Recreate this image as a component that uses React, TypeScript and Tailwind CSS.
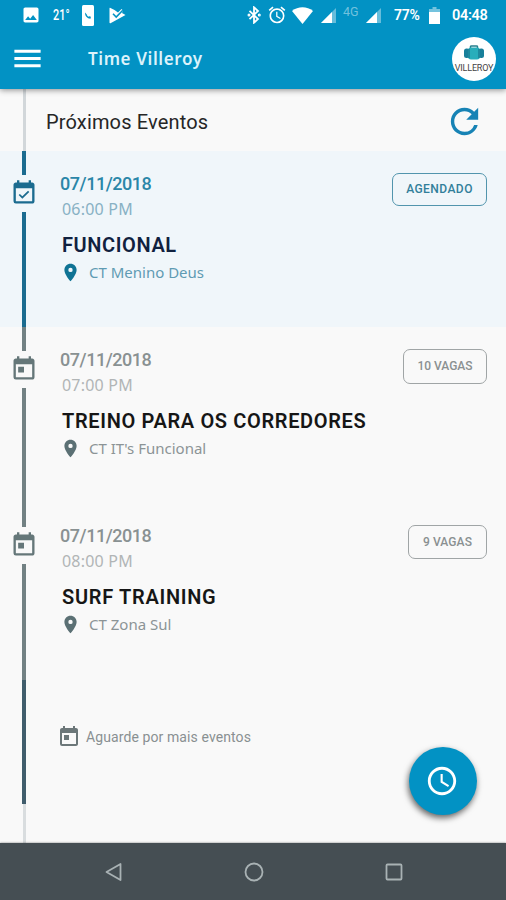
import type { ReactNode } from "react";
import clsx from "clsx";
import {
  MdAccessTime,
  MdAlarm,
  MdEventAvailable,
  MdImage,
  MdMenu,
  MdPlace,
  MdRefresh,
  MdToday,
} from "react-icons/md";

interface EventItem {
  date: string;
  time: string;
  title: string;
  titleSpacing: string;
  place: string;
  badge: string;
  badgeSize: string;
  booked?: boolean;
}

const events: EventItem[] = [
  {
    date: "07/11/2018",
    time: "06:00 PM",
    title: "FUNCIONAL",
    titleSpacing: "tracking-[0.6px]",
    place: "CT Menino Deus",
    badge: "AGENDADO",
    badgeSize: "w-[95px] mt-px h-[33px] tracking-[0.45px]",
    booked: true,
  },
  {
    date: "07/11/2018",
    time: "07:00 PM",
    title: "TREINO PARA OS CORREDORES",
    titleSpacing: "tracking-[0.65px]",
    place: "CT IT's Funcional",
    badge: "10 VAGAS",
    badgeSize: "w-[84px] mt-px h-[35px] tracking-[0px]",
  },
  {
    date: "07/11/2018",
    time: "08:00 PM",
    title: "SURF TRAINING",
    titleSpacing: "tracking-[0.7px]",
    place: "CT Zona Sul",
    badge: "9 VAGAS",
    badgeSize: "w-[79px] mt-px h-[34px] tracking-[0.1px]",
  },
];

function SignalIcon() {
  return (
    <svg className="h-[15px] w-[15px]" viewBox="0 0 15 15">
      <path d="M15 0V15H0Z" fill="#fff" fillOpacity=".4" />
      <path d="M11 4V15H0Z" fill="#fff" />
    </svg>
  );
}

function StatusBar() {
  return (
    <div className="flex h-[30px] items-center pl-[21px] pr-[18px] text-white">
      <MdImage className="mr-[12px] size-[20px]" />
      <span className="mr-[12px] w-[17px] origin-left scale-x-[.78] whitespace-nowrap text-[14px] font-medium">
        21°
      </span>
      {/* chamada */}
      <svg className="mr-[15px] h-[21px] w-[12px]" viewBox="0 0 12 21">
        <rect width="12" height="21" rx="1.500" fill="#fff" />
        <path
          d="M3 7.500c0 3.500 2 6 5.500 6.300l.4-2-1.600-.6-.8.600c-1-.6-1.500-1.300-1.700-2.300z"
          fill="#0292c4"
        />
      </svg>
      <svg className="h-[17px] w-[17px]" viewBox="0 0 17 17">
        <path
          d="M1 .8 5.500 3 9 5.400 12.500 2 14 3.500 13 6l3.500 2L1.500 16.200Q.5 16.500.5 15.500V1.200Q.5.600 1 .8Z"
          fill="#fff"
        />
        <path d="M4 6.800 7.200 10 13.800 3.300" fill="none" stroke="#0292c4" strokeWidth="1.600" />
      </svg>
      <div className="ml-auto flex items-center">
        <svg className="mr-[6px] h-[18px] w-[14px]" viewBox="0 0 14 18" fill="none" stroke="#fff" strokeWidth="1.800">
          <path d="M2.500 4.800 11 13l-4 3.700V1.300L11 5l-8.500 8.200" />
          <circle cx="2" cy="9" r=".6" />
          <circle cx="12.300" cy="9" r=".6" />
        </svg>
        <MdAlarm className="mr-[5px] size-[20px]" />
        <svg className="mr-[8px] h-[17px] w-[21px]" viewBox="0 0 21 17">
          <path d="M0 4C6-1 15-1 21 4L10.500 17Z" fill="#fff" />
        </svg>
        <SignalIcon />
        <span className="-mt-1.5 ml-[7px] mr-[6px] w-[17px] text-[12.500px] text-white/45">4G</span>
        <SignalIcon />
        <span className="ml-[13px] mr-[9px] w-[26px] text-[14px] font-semibold tracking-[-0.3px]">77%</span>
        <svg className="mr-[12px] h-[17px] w-[11px]" viewBox="0 0 11 17">
          <path d="M3.500 0h4v2H11v4H0V2h3.500z" fill="#fff" fillOpacity=".45" />
          <path d="M0 5h11v12H0z" fill="#fff" />
        </svg>
        <span className="w-[36px] pt-px text-[14.500px] font-semibold tracking-[-0.3px]">04:48</span>
      </div>
    </div>
  );
}

function Logo() {
  return (
    <div className="flex size-[44px] flex-col items-center overflow-hidden rounded-full bg-white pt-[8px]">
      <svg className="h-[16px] w-[22px] shrink-0" viewBox="0 0 22 16">
        <path d="M7.500 3V1.700Q7.500 1 8.500 1h5q1 0 1 .7V3" fill="none" stroke="#247f8d" strokeWidth="1.500" />
        <rect x="1" y="3.500" width="5.500" height="9.500" rx="2.500" fill="#187f9a" />
        <rect x="15.500" y="3.500" width="5.500" height="9.500" rx="2.500" fill="#187f9a" />
        <rect x="5" y="2.500" width="12" height="12" rx="3" fill="#28aebb" />
        <path d="M6 4v9M16 4v9" stroke="#126782" />
      </svg>
      <span className="mt-[2px] whitespace-nowrap text-[9px] leading-[11px] tracking-[-0.2px] text-[#444]">
        VILLEROY
      </span>
    </div>
  );
}

function Header() {
  return (
    <header className="relative z-10 h-[89px] bg-[#0292c4] shadow-[0_1px_6px_rgba(0,0,0,.45)]">
      <StatusBar />
      <div className="flex h-[57px] items-center px-[10px] text-white">
        <MdMenu className="size-[35px]" />
        <h1 className="ml-[43px] font-['Noto_Sans'] text-[17px] font-semibold tracking-[0.6px] text-[#dcf2fb]">
          Time Villeroy
        </h1>
        <div className="ml-auto">
          <Logo />
        </div>
      </div>
    </header>
  );
}

function Rail({ color, children }: { color: string; children: ReactNode }) {
  return (
    <div className="flex w-12 shrink-0 flex-col items-center">
      <div className={clsx("h-[24px] w-[3.500px]", color)} />
      <div className="flex h-[37px] items-center pb-[2px]">{children}</div>
      <div className={clsx("w-[3.500px] flex-1", color)} />
    </div>
  );
}

function EventRow({ event }: { event: EventItem }) {
  const { booked } = event;
  return (
    <li className={clsx("flex h-[176px]", booked && "bg-[#f0f6fa]")}>
      <Rail color={booked ? "bg-[#1b6b8f]" : "bg-[#728183]"}>
        {booked ? (
          <MdEventAvailable className="size-[28px] text-[#1b6b8f]" />
        ) : (
          <MdToday className="size-[28px] text-[#657779]" />
        )}
      </Rail>
      <div className="flex flex-1 justify-between pl-[12px] pr-[19px] pt-[21px]">
        <div>
          <p
            className={clsx(
              "text-[18px] font-medium leading-6 tracking-[-0.45px]",
              booked ? "text-[#2a86a8]" : "text-[#899192]"
            )}
          >
            {event.date}
          </p>
          <p
            className={clsx(
              "pl-[2px] pt-px font-['Noto_Sans'] text-[16px] leading-6 tracking-[0.2px]",
              booked ? "text-[#88b1c4]" : "text-[#b1b5b6]"
            )}
          >
            {event.time}
          </p>
          <h2
            className={clsx(
              "mt-[10px] whitespace-nowrap pl-[2px] text-[20px] font-semibold leading-7",
              event.titleSpacing,
              booked ? "text-[#10213f]" : "text-[#161616]"
            )}
          >
            {event.title}
          </h2>
          <p
            className={clsx(
              "mt-px flex items-center font-['Noto_Sans'] text-[15px] leading-6",
              booked ? "text-[#5f9bb3]" : "text-[#8c9496]"
            )}
          >
            <MdPlace
              className={clsx("mr-[8px] size-[21px]", booked ? "text-[#0f7394]" : "text-[#5b7074]")}
            />
            {event.place}
          </p>
        </div>
        <span
          className={clsx(
            "flex items-center justify-center rounded-[7px] border pb-px text-[12px] font-medium",
            event.badgeSize,
            booked ? "border-[#5295ad] text-[#327f9a]" : "border-[#a0a5a6] text-[#8a9091]"
          )}
        >
          {event.badge}
        </span>
      </div>
    </li>
  );
}

export default function App() {
  return (
    <div className="flex h-[900px] w-[506px] flex-col overflow-hidden bg-[#f9f9f9] font-[Roboto,sans-serif]">
      <Header />
      <main className="relative flex-1">
        <div className="flex h-[62px]">
          <div className="flex w-12 justify-center">
            <div className="w-[3px] bg-[#d2d7da]" />
          </div>
          <div className="flex flex-1 items-center justify-between pr-[21px] pt-[3px]">
            <h2 className="-ml-[2px] text-[20px] tracking-[0.15px] text-[#262626]">Próximos Eventos</h2>
            <MdRefresh className="size-[41px] text-[#1783b5]" />
          </div>
        </div>
        <ul>
          {events.map((event) => (
            <EventRow key={event.time} event={event} />
          ))}
        </ul>
        <div className="flex h-[164px]">
          <div className="flex w-12 flex-col items-center">
            <div className="h-px w-[3.500px] bg-[#728183]" />
            <div className="h-[124px] w-[3.500px] bg-[#405d6c]" />
            <div className="w-[3px] flex-1 bg-[#d9dddf]" />
          </div>
          <div className="flex h-[115px] items-center pl-[9px] text-[#899092]">
            <MdToday className="size-[24px] text-[#6c7779]" />
            <span className="ml-[5px] pt-[2px] text-[14px] tracking-[0.1px]">Aguarde por mais eventos</span>
          </div>
        </div>
        <button className="absolute bottom-[28px] right-[29px] flex size-[68px] items-center justify-center rounded-full bg-[#0292c4] pr-[2px] text-white shadow-[-1px_3px_6px_rgba(0,0,0,.6)]">
          <MdAccessTime className="size-[34px]" />
        </button>
      </main>
      <nav className="relative z-10 flex h-[57px] items-center justify-between bg-[#454e53] px-[103px] shadow-[0_0_2px_rgba(0,0,0,.5)]">
        <svg className="size-[20px]" viewBox="0 0 20 20" fill="none" stroke="#a9b2b4" strokeWidth="1.800">
          <path d="M17.500 2V18L3.500 10Z" strokeLinejoin="round" />
        </svg>
        <svg className="size-[20px]" viewBox="0 0 20 20" fill="none" stroke="#a9b2b4" strokeWidth="1.800">
          <circle cx="10" cy="10" r="8.500" />
        </svg>
        <svg className="size-[18px]" viewBox="0 0 18 18" fill="none" stroke="#a9b2b4" strokeWidth="1.800">
          <rect x="1.500" y="1.500" width="15" height="15" rx="1" />
        </svg>
      </nav>
    </div>
  );
}
